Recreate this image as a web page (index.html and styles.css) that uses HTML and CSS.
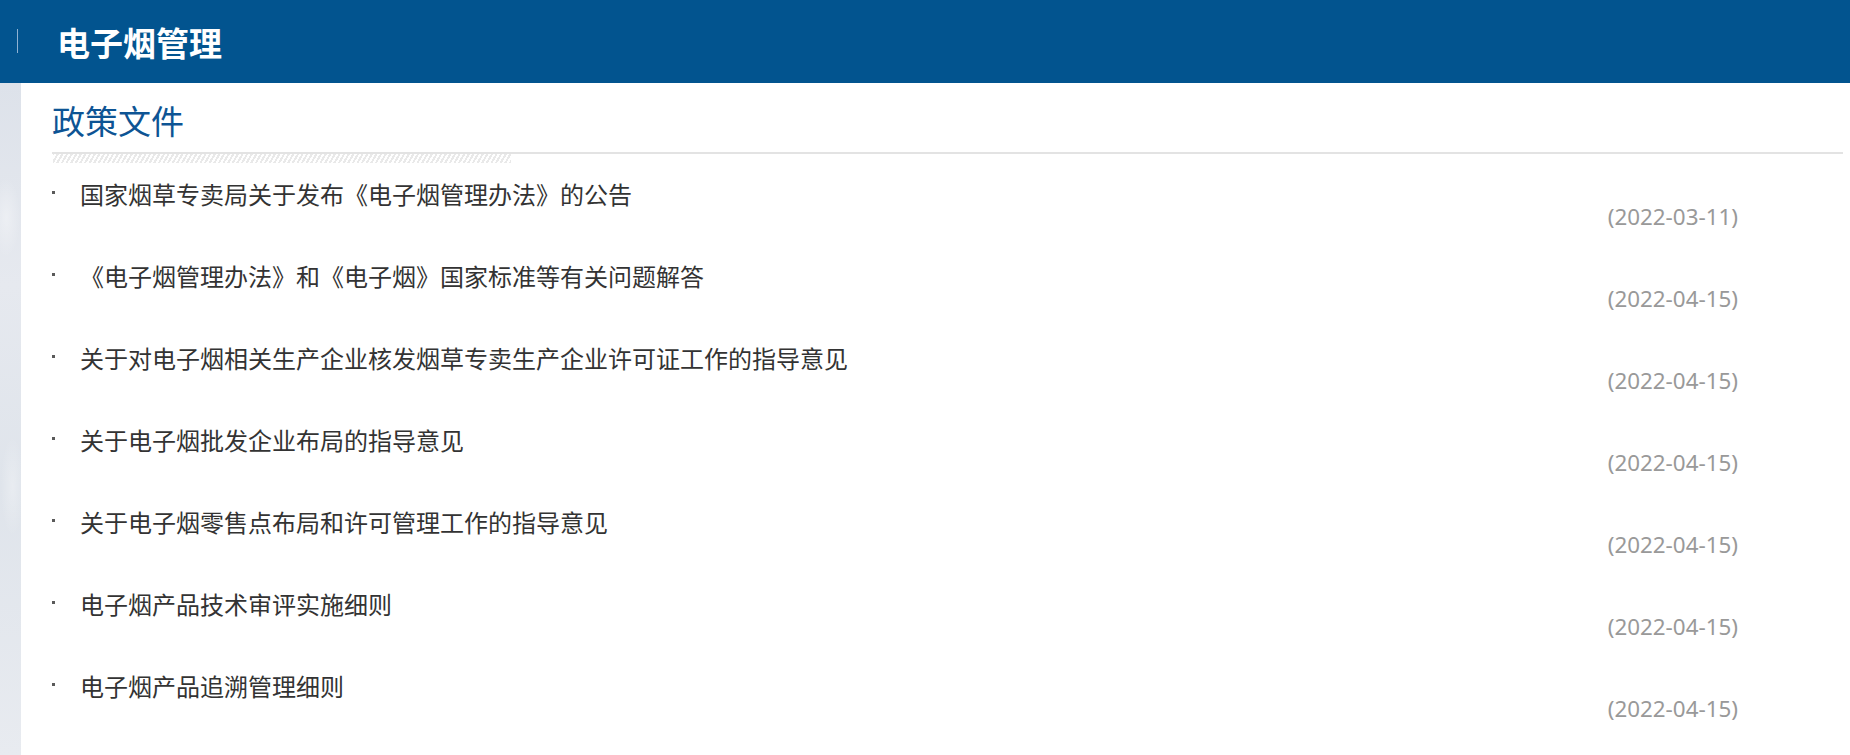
FILE: index.html
```html
<!DOCTYPE html>
<html lang="zh-CN">
<head>
<meta charset="utf-8">
<title>电子烟管理</title>
<link rel="stylesheet" href="styles.css">
</head>
<body>
<header class="topbar">
  <span class="topbar-mark"></span>
  <h1 class="topbar-title">电子烟管理</h1>
</header>
<div class="layout">
  <div class="strip"></div>
  <main class="panel">
    <div class="section-head">
      <h2 class="section-title">政策文件</h2>
      <div class="section-rule"><span class="hatch"></span></div>
    </div>
    <ul class="doc-list">
      <li class="doc"><div class="doc-line"><span class="dot"></span><a class="doc-title">国家烟草专卖局关于发布《电子烟管理办法》的公告</a></div><div class="doc-date">(2022-03-11)</div></li>
      <li class="doc"><div class="doc-line"><span class="dot"></span><a class="doc-title">《电子烟管理办法》和《电子烟》国家标准等有关问题解答</a></div><div class="doc-date">(2022-04-15)</div></li>
      <li class="doc"><div class="doc-line"><span class="dot"></span><a class="doc-title">关于对电子烟相关生产企业核发烟草专卖生产企业许可证工作的指导意见</a></div><div class="doc-date">(2022-04-15)</div></li>
      <li class="doc"><div class="doc-line"><span class="dot"></span><a class="doc-title">关于电子烟批发企业布局的指导意见</a></div><div class="doc-date">(2022-04-15)</div></li>
      <li class="doc"><div class="doc-line"><span class="dot"></span><a class="doc-title">关于电子烟零售点布局和许可管理工作的指导意见</a></div><div class="doc-date">(2022-04-15)</div></li>
      <li class="doc"><div class="doc-line"><span class="dot"></span><a class="doc-title">电子烟产品技术审评实施细则</a></div><div class="doc-date">(2022-04-15)</div></li>
      <li class="doc"><div class="doc-line"><span class="dot"></span><a class="doc-title">电子烟产品追溯管理细则</a></div><div class="doc-date">(2022-04-15)</div></li>
    </ul>
  </main>
</div>
</body>
</html>
```
FILE: styles.css
```css
* { box-sizing: border-box; }
html, body { margin: 0; padding: 0; }
body {
  width: 1850px;
  height: 755px;
  overflow: hidden;
  font-family: "Noto Sans CJK SC", "Noto Sans", sans-serif;
  background: #fff;
}
.topbar {
  height: 83px;
  background: #02548f;
  display: flex;
  align-items: center;
}
.topbar-mark {
  width: 1px;
  height: 24px;
  margin-left: 17px;
  background: #8fb2d3;
  margin-bottom: 2px;
}
.topbar-title {
  margin: 0 0 0 39px;
  font-size: 33px;
  line-height: 40px;
  font-weight: 700;
  color: #fff;
  letter-spacing: 0;
}
.layout {
  display: flex;
  height: 672px;
}
.strip {
  width: 21px;
  flex: none;
  background:
    radial-gradient(ellipse 14px 40px at 30% 20%, rgba(255,255,255,0.35), transparent),
    radial-gradient(ellipse 12px 50px at 60% 60%, rgba(255,255,255,0.3), transparent),
    linear-gradient(180deg, #dde2ea 0%, #e6e9ef 30%, #dfe4eb 60%, #e8ebf0 100%);
}
.panel {
  flex: 1;
  padding: 17px 7px 0 31px;
}
.section-title {
  margin: 0;
  font-size: 33px;
  line-height: 40px;
  font-weight: 400;
  color: #0d5494;
}
.section-rule {
  margin-top: 12px;
  border-top: 2px solid #e3e3e3;
  height: 11px;
}
.hatch {
  display: block;
  width: 458px;
  height: 9px;
  margin-left: 1px;
  background: repeating-linear-gradient(-60deg, #e9e9e9 0 2px, #ffffff 2px 4px);
}
.doc-list {
  list-style: none;
  margin: 0;
  padding: 0;
}
.doc {
  height: 82px;
  padding-top: 18px;
}
.doc-line {
  display: flex;
  align-items: center;
  height: 26px;
}
.dot {
  width: 3px;
  height: 3px;
  background: #5a5a5a;
  margin-right: 25px;
  margin-bottom: 4px;
  flex: none;
}
.doc-title {
  font-size: 24px;
  line-height: 26px;
  color: #333;
  text-decoration: none;
  letter-spacing: 0;
}
.doc-date {
  text-align: right;
  margin-right: 105px;
  font-family: "Noto Sans", "Open Sans", sans-serif;
  font-size: 22.4px;
  line-height: 22px;
  margin-top: -1px;
  color: #999;
}
```
